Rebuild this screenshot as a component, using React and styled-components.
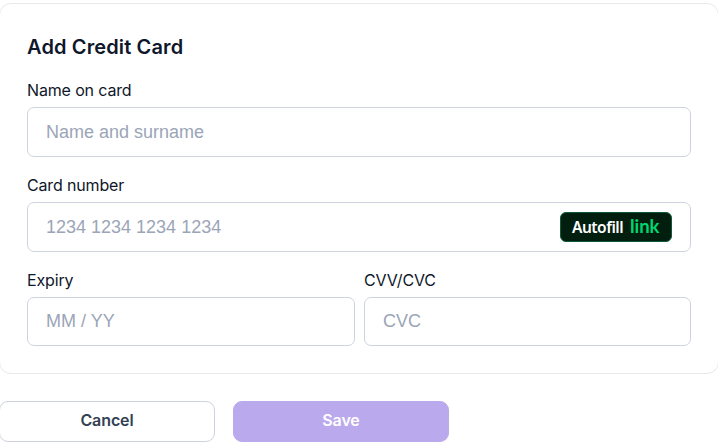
import React from "react";
import styled, { createGlobalStyle } from "styled-components";

const Global = createGlobalStyle`
  * { box-sizing: border-box; }
  body { margin: 0; background: #fff; font-family: Inter, sans-serif; overflow: hidden; }
`;
const Page = styled.main`
  width: 718px; height: 445px; padding-top: 3px; overflow: hidden;
`;
const Card = styled.section`
  height: 371px; margin: 0 -1px; border: 1px solid #e8e9ec; border-radius: 12px; padding: 31px 27px 0;
`;
const Title = styled.h2`
  margin: 0; font-size: 20px; line-height: 24px; font-weight: 600; color: #0f172a; letter-spacing: 0.13px;
`;
const Fields = styled.div`
  display: grid; grid-template-columns: 328px 327px; column-gap: 9px; row-gap: 16px; margin-top: 19px;
`;
const Field = styled.label`
  display: flex; flex-direction: column; grid-column: ${(p) => (p.$wide ? "1 / -1" : "auto")};
`;
const Label = styled.span`
  font-size: 16px; line-height: 24px; margin-bottom: 5px; color: #0f172a; letter-spacing: -0.15px;
`;
const InputBox = styled.span`
  display: flex; align-items: center; height: ${(p) => p.$h}px; border: 1px solid #cfd3de; border-radius: 7px; padding: 0 18px;
`;
const Input = styled.input`
  flex: 1; min-width: 0; border: 0; outline: 0; padding: 0; background: none;
  font: 18px "Liberation Sans", Arial, sans-serif; color: #0f172a;
  &::placeholder { color: #9ba5b7; opacity: 1; }
`;
const Autofill = styled.button`
  display: flex; align-items: baseline; gap: 7px; width: 112px; height: 30px; padding: 0 0 0 11px;
  border: 1px solid #0b5a38; border-radius: 6px; background: #011e0f; color: #fff;
  font: 600 15.5px/28px "Noto Sans", sans-serif; letter-spacing: -0.5px; white-space: nowrap;
`;
const LinkWord = styled.span`
  color: #00d66f; font: 700 18.5px/24px Lato, sans-serif; letter-spacing: -0.1px;
`;
const Actions = styled.footer`
  display: flex; gap: 18px; margin: 27px 0 0 -1px;
`;
const Button = styled.button`
  height: 41px; border-radius: 9px; font: 600 16px Inter, sans-serif; padding: 0 0 3px;
  width: 216px; letter-spacing: -0.1px;
  border: 1px solid ${(p) => (p.$primary ? "#bba9ee" : "#cfd3de")};
  background: ${(p) => (p.$primary ? "#bba9ee" : "#fff")};
  color: ${(p) => (p.$primary ? "#fff" : "#334155")};
`;

function TextField({ label, placeholder, wide, h = 50, children }) {
  return (
    <Field $wide={wide}>
      <Label>{label}</Label>
      <InputBox $h={h}><Input placeholder={placeholder} />{children}</InputBox>
    </Field>
  );
}

export default function App() {
  return (
    <Page>
      <Global />
      <Card>
        <Title>Add Credit Card</Title>
        <Fields>
          <TextField wide label="Name on card" placeholder="Name and surname" />
          <TextField wide label="Card number" placeholder="1234 1234 1234 1234">
            <Autofill type="button">Autofill<LinkWord>link</LinkWord></Autofill>
          </TextField>
          <TextField h={49} label="Expiry" placeholder="MM / YY" />
          <TextField h={49} label="CVV/CVC" placeholder="CVC" />
        </Fields>
      </Card>
      <Actions>
        <Button>Cancel</Button>
        <Button $primary>Save</Button>
      </Actions>
    </Page>
  );
}
